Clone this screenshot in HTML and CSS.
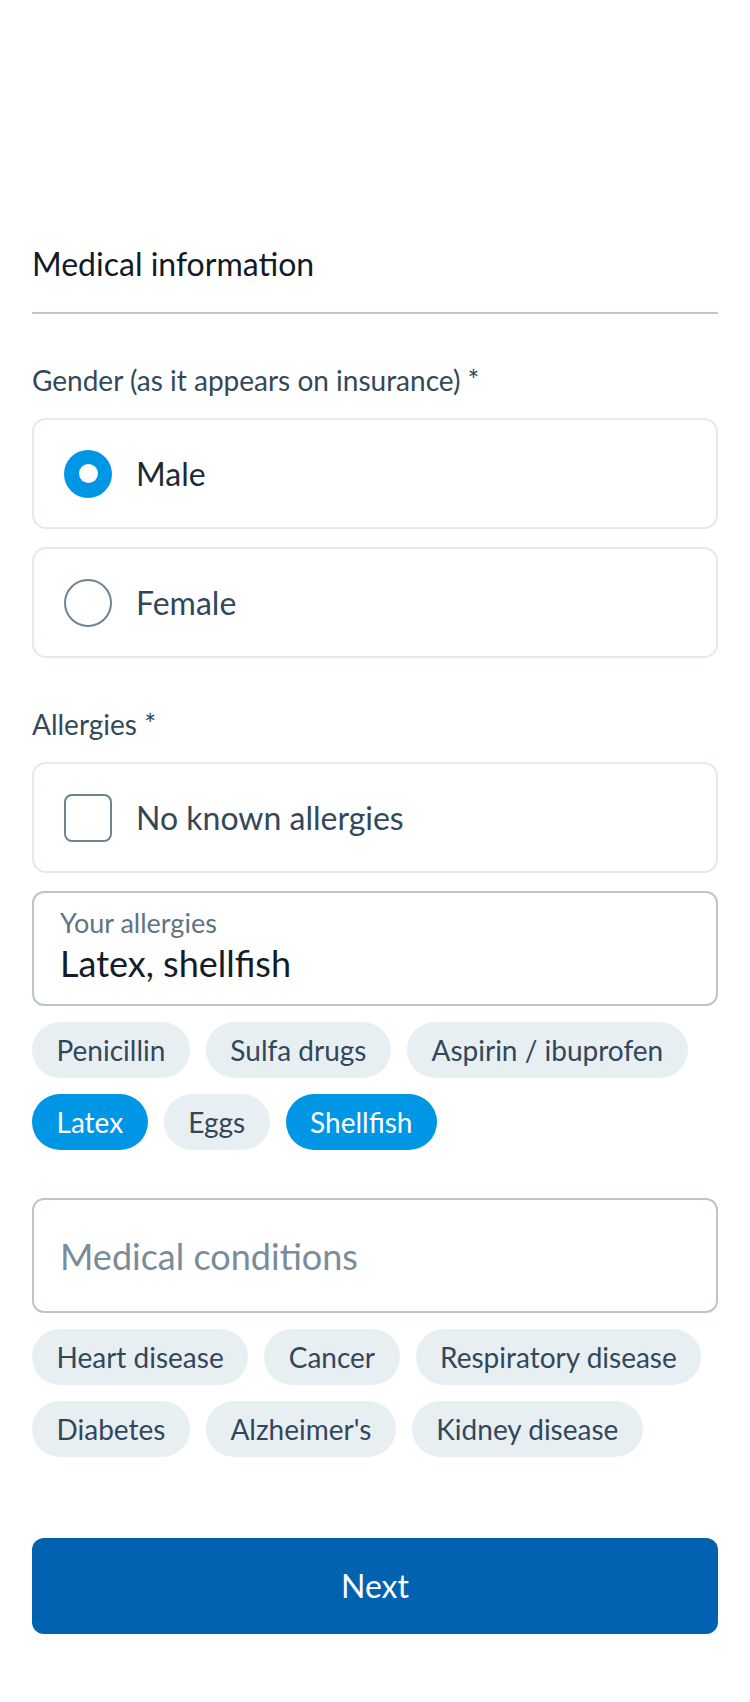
FILE: index.html
```html
<!DOCTYPE html>
<html lang="en">
<head>
<meta charset="utf-8">
<title>Medical information</title>
<link rel="stylesheet" href="styles.css">
</head>
<body>
<main class="page">
  <h1 class="title">Medical information</h1>

  <section class="section">
    <div class="label">Gender (as it appears on insurance) *</div>
    <div class="options">
      <div class="option">
        <span class="radio radio-on"></span>
        <span class="option-text option-text-on">Male</span>
      </div>
      <div class="option">
        <span class="radio"></span>
        <span class="option-text">Female</span>
      </div>
    </div>
  </section>

  <section class="section">
    <div class="label">Allergies *</div>
    <div class="options">
      <div class="option">
        <span class="checkbox"></span>
        <span class="option-text">No known allergies</span>
      </div>
      <div class="field field-filled">
        <div class="field-label">Your allergies</div>
        <div class="field-value">Latex, shellfish</div>
      </div>
    </div>
    <div class="chips">
      <span class="chip">Penicillin</span>
      <span class="chip">Sulfa drugs</span>
      <span class="chip">Aspirin / ibuprofen</span>
      <span class="chip chip-on">Latex</span>
      <span class="chip">Eggs</span>
      <span class="chip chip-on">Shellfish</span>
    </div>
  </section>

  <section class="section">
    <div class="field field-empty">
      <div class="field-placeholder">Medical conditions</div>
    </div>
    <div class="chips">
      <span class="chip">Heart disease</span>
      <span class="chip">Cancer</span>
      <span class="chip">Respiratory disease</span>
      <span class="chip">Diabetes</span>
      <span class="chip">Alzheimer's</span>
      <span class="chip">Kidney disease</span>
    </div>
  </section>

  <button class="next">Next</button>
</main>
</body>
</html>
```

FILE: styles.css
```css
* { box-sizing: border-box; }

html, body {
  margin: 0;
  padding: 0;
  background: #ffffff;
}

body {
  font-family: Lato, "Open Sans", sans-serif;
  color: #1a2530;
}

.page {
  padding: 244px 32px 0;
}

.title {
  margin: 0;
  font-size: 32px;
  line-height: 40px;
  font-weight: 400;
  color: #121b24;
  padding-bottom: 28px;
  border-bottom: 2px solid #bcc7ce;
}

.section {
  margin-top: 48px;
}

.label {
  font-size: 28px;
  line-height: 36px;
  color: #34485a;
  margin-bottom: 20px;
}

.options {
  display: flex;
  flex-direction: column;
  gap: 18px;
}

.option {
  height: 111px;
  border: 2px solid #e2eaef;
  border-radius: 14px;
  display: flex;
  align-items: center;
  padding: 0 30px;
  gap: 24px;
}

.radio {
  width: 48px;
  height: 48px;
  border-radius: 50%;
  border: 2px solid #6f8391;
  flex: none;
  display: flex;
  align-items: center;
  justify-content: center;
}

.radio-on {
  border: none;
  background: #0096e6;
}

.radio-on::after {
  content: "";
  width: 19px;
  height: 19px;
  border-radius: 50%;
  background: #ffffff;
}

.checkbox {
  width: 48px;
  height: 48px;
  border: 2px solid #6f8391;
  border-radius: 8px;
  flex: none;
}

.option-text {
  font-size: 32px;
  line-height: 40px;
  color: #33475a;
}

.option-text-on {
  color: #1d2a35;
}

.field {
  border: 2px solid #bac6ce;
  border-radius: 12px;
  padding: 0 26px;
}

.field-filled {
  height: 115px;
  padding-top: 14px;
}

.field-label {
  font-size: 27px;
  line-height: 32px;
  color: #5f7383;
}

.field-value {
  margin-top: 2px;
  font-size: 36px;
  line-height: 44px;
  color: #141d27;
}

.field-empty {
  height: 115px;
  display: flex;
  align-items: center;
}

.field-placeholder {
  font-size: 36px;
  line-height: 44px;
  color: #7a8c99;
}

.chips {
  margin-top: 16px;
  display: flex;
  flex-wrap: wrap;
  gap: 16px;
}

.chip {
  height: 56px;
  border-radius: 28px;
  padding: 0 24.5px;
  background: #e8eff3;
  color: #33475a;
  font-size: 28px;
  line-height: 56px;
}

.chip-on {
  background: #0096e6;
  color: #ffffff;
}

.next {
  display: block;
  width: 100%;
  margin-top: 81px;
  height: 96px;
  border: none;
  border-radius: 12px;
  background: #0062b1;
  color: #ffffff;
  font-family: Lato, "Open Sans", sans-serif;
  font-size: 32px;
  line-height: 40px;
}
```
